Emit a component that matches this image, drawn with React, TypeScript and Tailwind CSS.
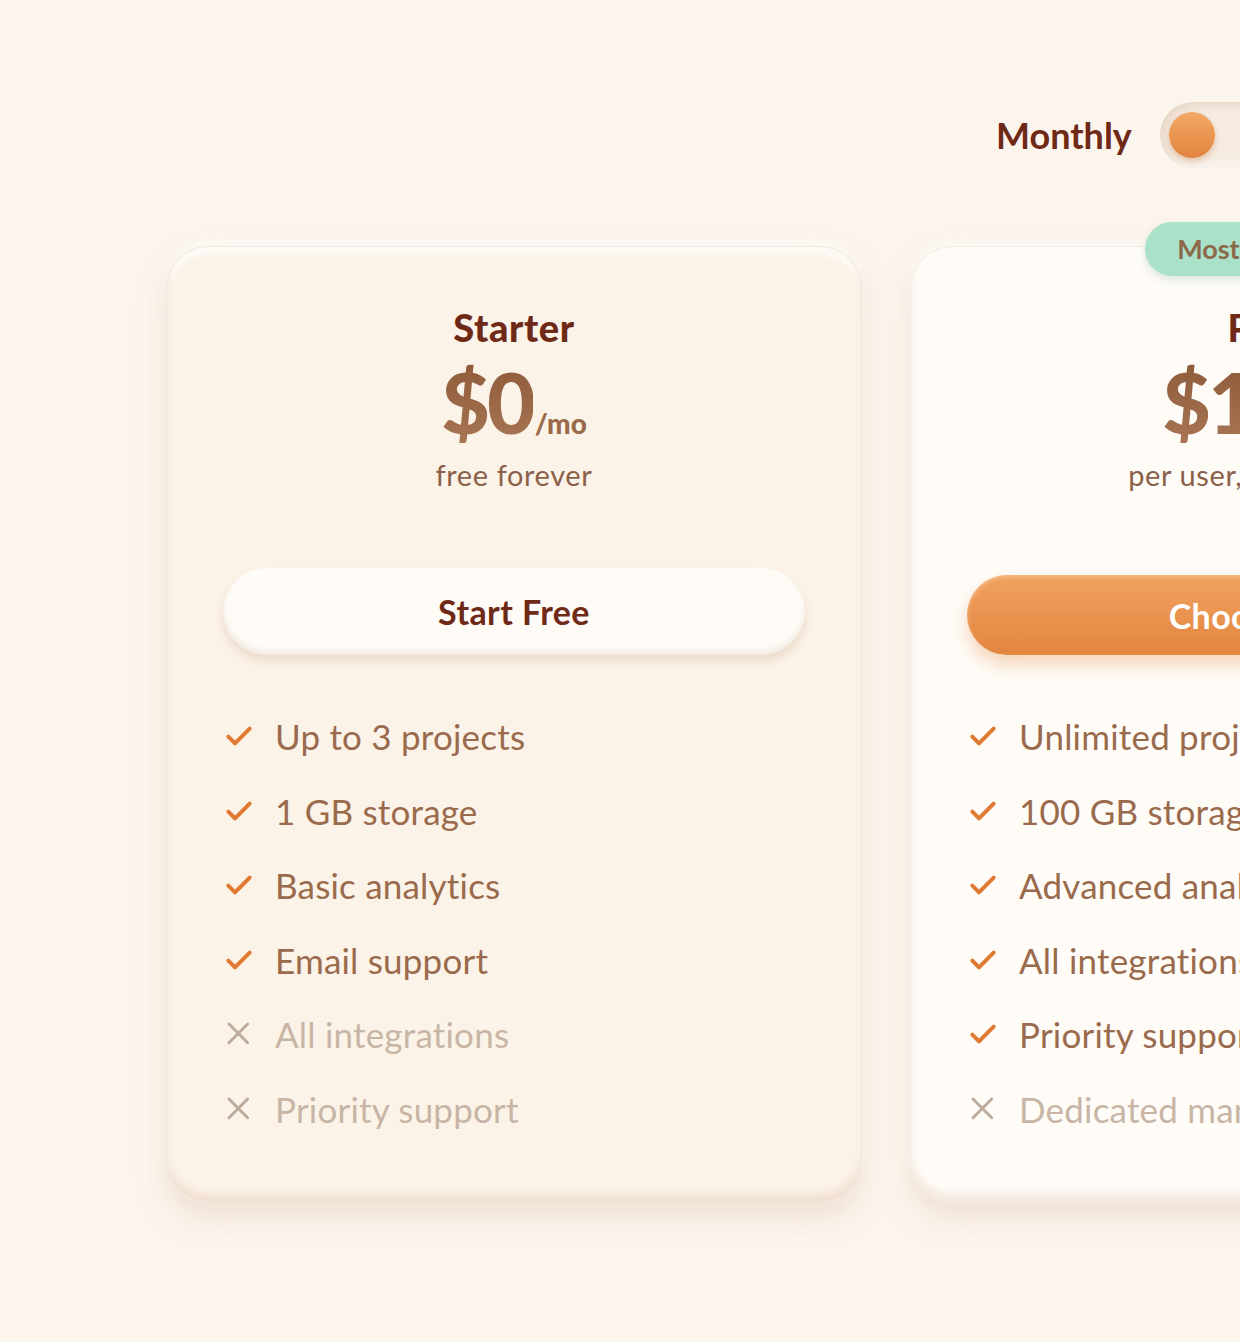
import React from "react";

const font = { fontFamily: "Lato, 'Noto Sans', sans-serif" };

function Check() {
  return (
    <svg width="32" height="32" viewBox="0 0 24 24" fill="none" className="shrink-0">
      <path d="M4 12.5l5 5L20 6.5" stroke="#e07a32" strokeWidth="3" strokeLinecap="round" strokeLinejoin="round" />
    </svg>
  );
}

function Cross() {
  return (
    <svg width="32" height="32" viewBox="0 0 24 24" fill="none" className="shrink-0">
      <path d="M4.5 4.5l14 14M18.5 4.5l-14 14" stroke="#bcaa9a" strokeWidth="2.2" strokeLinecap="round" />
    </svg>
  );
}

type Feature = { text: string; on: boolean };

function FeatureList({ items }: { items: Feature[] }) {
  return (
    <ul className="mt-[44px] flex flex-col">
      {items.map((f) => (
        <li key={f.text} className="flex h-[74.5px] items-center gap-[20px]">
          {f.on ? <Check /> : <Cross />}
          <span
            className={
              "whitespace-nowrap text-[35px] leading-[40px] tracking-[0.2px] " +
              (f.on ? "text-[#9a6a4c]" : "text-[#c8b5a5]")
            }
          >
            {f.text}
          </span>
        </li>
      ))}
    </ul>
  );
}

function PriceHead({ name, price, sub }: { name: string; price: string; sub: string }) {
  return (
    <div className="flex flex-col items-center">
      <div className="text-[38px] font-black leading-[44px] tracking-[0.6px] text-[#6e2a16]">{name}</div>
      <div className="mt-[9px] flex items-baseline leading-[88px]">
        <span className="bg-gradient-to-b from-[#8d5a3a] to-[#a87654] bg-clip-text text-[84px] font-black tracking-[-3px] text-transparent">
          {price}
        </span>
        <span className="ml-[2px] text-[28px] font-black text-[#9b6a4a]">/mo</span>
      </div>
      <div className="mt-[-10px] text-[29px] leading-[36px] tracking-[0.6px] text-[#8b6048]">{sub}</div>
    </div>
  );
}

export default function App() {
  return (
    <div className="h-[1342px] w-[1240px] overflow-hidden bg-[#fcf5ee]" style={font}>
      <div className="ml-[166px] w-[2184px] pt-[102px]">
        <div className="flex items-center gap-[28px] pl-[830px]">
          <span className="text-[36px] font-bold leading-[44px] text-[#6e2a16]">Monthly</span>
          <div className="flex h-[66px] w-[124px] items-center rounded-full bg-[#f6ece2] pl-[9px] shadow-[inset_3px_3px_8px_rgba(214,190,168,0.55),inset_-3px_-3px_8px_rgba(255,255,255,0.9)]">
            <div className="h-[46px] w-[46px] rounded-full bg-gradient-to-b from-[#f2a865] to-[#e1843d] shadow-[0_3px_6px_rgba(190,110,50,0.35)]" />
          </div>
          <span className="text-[36px] font-bold leading-[44px] text-[#b08a70]">Yearly</span>
        </div>

        <div className="mt-[78px] flex items-start gap-[48px]">
          {/* Starter */}
          <div className="w-[696px] shrink-0 rounded-[42px] border border-[#f3e6da] bg-[#fcf3e8] px-[56px] pb-[56px] pt-[58px] shadow-[0_14px_28px_rgba(215,185,160,0.35),0_-4px_10px_rgba(255,255,255,0.8),inset_0_-8px_8px_rgba(222,196,175,0.4),inset_0_6px_10px_rgba(255,255,255,0.85)]">
            <PriceHead name="Starter" price="$0" sub="free forever" />
            <button className="mt-[75px] flex h-[87px] w-full items-center justify-center rounded-full bg-[#fffcf8] text-[34px] font-bold tracking-[0.4px] text-[#6e2a16] shadow-[0_6px_10px_rgba(215,190,168,0.45),inset_0_-4px_6px_rgba(230,215,200,0.5)]">
              Start Free
            </button>
            <FeatureList
              items={[
                { text: "Up to 3 projects", on: true },
                { text: "1 GB storage", on: true },
                { text: "Basic analytics", on: true },
                { text: "Email support", on: true },
                { text: "All integrations", on: false },
                { text: "Priority support", on: false },
              ]}
            />
          </div>

          {/* Pro */}
          <div className="relative w-[696px] shrink-0 rounded-[42px] border border-[#f5ebe1] bg-[#fffcf8] px-[56px] pb-[56px] pt-[58px] shadow-[0_14px_28px_rgba(215,185,160,0.35),0_-4px_10px_rgba(255,255,255,0.8),inset_0_-8px_8px_rgba(222,196,175,0.35)]">
            <div className="absolute left-1/2 top-[-25px] flex h-[54px] w-[226px] -translate-x-1/2 items-center justify-center rounded-full bg-[#a9e2c8] text-[27px] font-bold text-[#8b6a4b] shadow-[0_4px_8px_rgba(150,190,170,0.35)]">
              Most Popular
            </div>
            <PriceHead name="Pro" price="$19" sub="per user, per month" />
            <button className="mt-[82px] flex h-[80px] w-full items-center justify-center rounded-full bg-gradient-to-b from-[#f1a260] to-[#e2853e] text-[34px] font-bold tracking-[0.4px] text-white shadow-[0_10px_18px_rgba(225,140,70,0.35),inset_0_2px_4px_rgba(255,220,180,0.5)]">
              Choose Pro
            </button>
            <FeatureList
              items={[
                { text: "Unlimited projects", on: true },
                { text: "100 GB storage", on: true },
                { text: "Advanced analytics", on: true },
                { text: "All integrations", on: true },
                { text: "Priority support", on: true },
                { text: "Dedicated manager", on: false },
              ]}
            />
          </div>

          {/* Team */}
          <div className="w-[696px] shrink-0 rounded-[42px] bg-[#fcf2e8] px-[56px] pb-[50px] pt-[58px]">
            <PriceHead name="Team" price="$49" sub="per month" />
          </div>
        </div>
      </div>
    </div>
  );
}
